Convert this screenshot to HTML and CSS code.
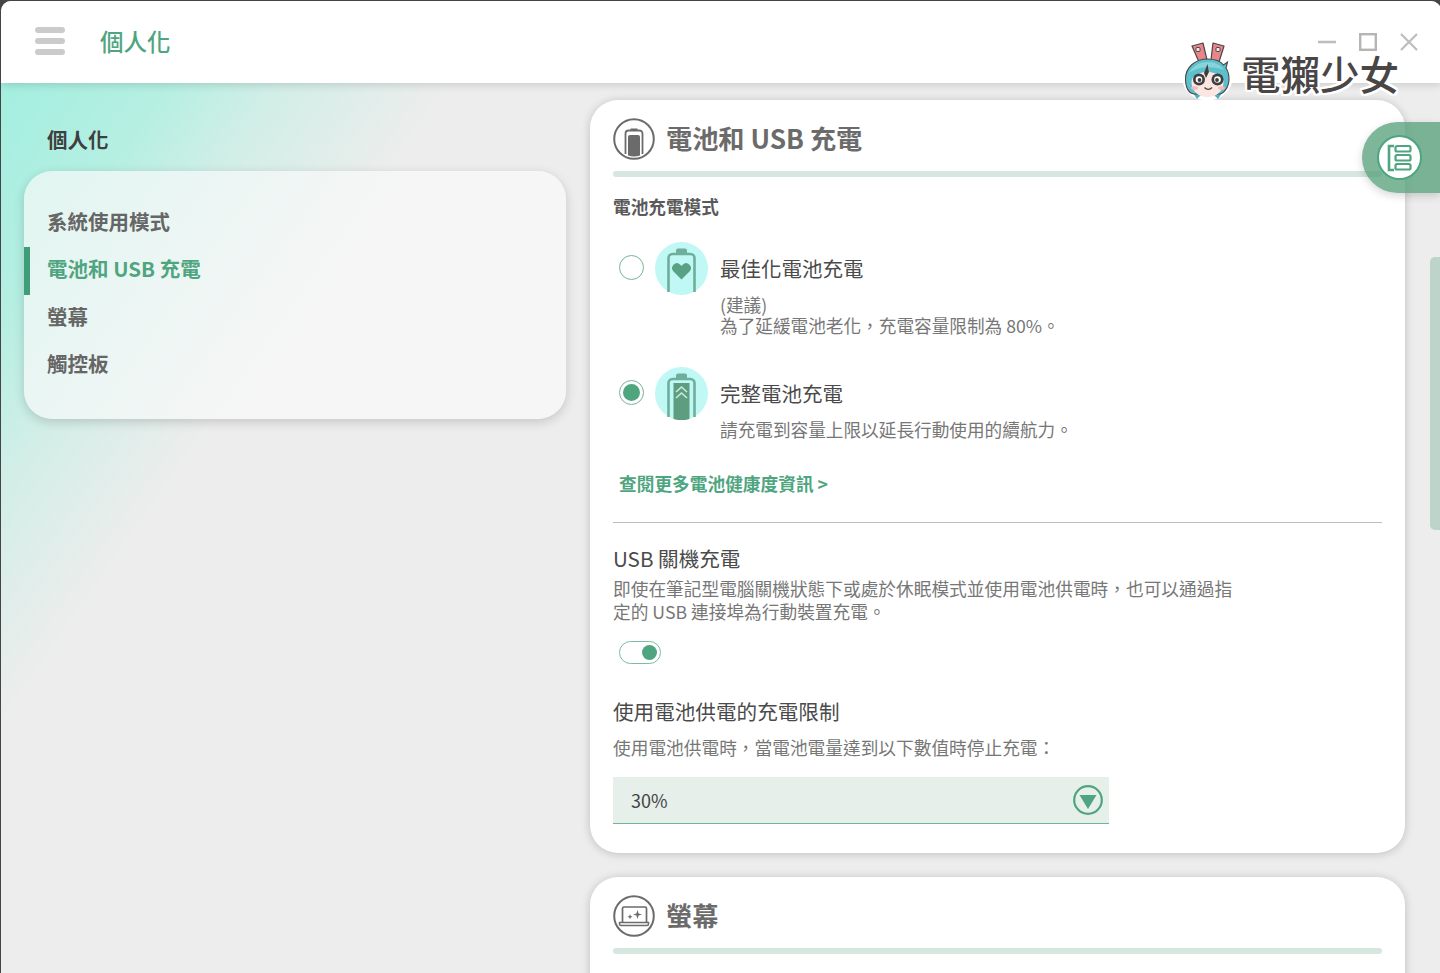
FILE: index.html
```html
<!DOCTYPE html>
<html lang="zh-Hant">
<head>
<meta charset="utf-8">
<title>個人化</title>
<link rel="stylesheet" href="styles.css">
</head>
<body>
<div class="window">
  <header class="topbar">
    <div class="hamburger"><span></span><span></span><span></span></div>
    <div class="app-title">個人化</div>
    <div class="win-controls">
      <svg width="18" height="18" viewBox="0 0 18 18"><path d="M0 9h18" stroke="#bdbdbd" stroke-width="2.4"/></svg>
      <svg width="18" height="18" viewBox="0 0 18 18"><rect x="1.2" y="1.2" width="15.6" height="15.6" fill="none" stroke="#b5b5b5" stroke-width="2.4"/></svg>
      <svg width="18" height="18" viewBox="0 0 18 18"><path d="M1 1l16 16M17 1L1 17" stroke="#bdbdbd" stroke-width="2.2" fill="none"/></svg>
    </div>
  </header>
  <main class="content">
    <aside class="sidebar">
      <h2 class="side-title">個人化</h2>
      <nav class="side-card">
        <a class="side-item">系統使用模式</a>
        <a class="side-item active">電池和 USB 充電</a>
        <a class="side-item">螢幕</a>
        <a class="side-item">觸控板</a>
      </nav>
    </aside>
    <section class="panel">
      <article class="card card-main">
        <div class="card-head">
          <svg class="head-icon" width="42" height="42" viewBox="0 0 42 42">
            <circle cx="21" cy="21" r="19.8" fill="none" stroke="#6b6b6b" stroke-width="2"/>
            <path d="M12.5 36V15.5a3 3 0 0 1 3-3h11a3 3 0 0 1 3 3V36" fill="none" stroke="#6b6b6b" stroke-width="1.8"/>
            <path d="M17.5 12.5V10.5h7v2z" fill="#6b6b6b"/>
            <path d="M15 37.5V19a2 2 0 0 1 2-2h8a2 2 0 0 1 2 2v18.5a19 19 0 0 1-12 0z" fill="#6b6b6b"/>
          </svg>
          <h3 class="card-title">電池和 USB 充電</h3>
        </div>
        <div class="head-bar"></div>
        <div class="label-strong">電池充電模式</div>

        <div class="option opt-first">
          <span class="radio"></span>
          <svg class="opt-icon" width="53" height="53" viewBox="0 0 53 53">
            <circle cx="26.5" cy="26.5" r="26.5" fill="#bff8f5"/>
            <path d="M13.5 50V16a4 4 0 0 1 4-4h18a4 4 0 0 1 4 4v34" fill="none" stroke="#6fae9a" stroke-width="2.6"/>
            <path d="M21 11.5V8.500a2 2 0 0 1 2-2h7a2 2 0 0 1 2 2v3z" fill="#6fae9a"/>
            <path d="M26.500 37.500l-8-8a5 5 0 0 1 0-6.800 5 5 0 0 1 6.800 0l1.200 1.200 1.200-1.200a5 5 0 0 1 6.800 0 5 5 0 0 1 0 6.800z" fill="#58a283"/>
          </svg>
          <div class="opt-body">
            <div class="opt-title">最佳化電池充電</div>
            <div class="opt-desc opt-desc-tight">(建議)<br>為了延緩電池老化，充電容量限制為 80%。</div>
          </div>
        </div>

        <div class="option opt-second">
          <span class="radio checked"></span>
          <svg class="opt-icon" width="53" height="53" viewBox="0 0 53 53">
            <circle cx="26.5" cy="26.5" r="26.5" fill="#bff8f5"/>
            <path d="M13.5 50V16a4 4 0 0 1 4-4h18a4 4 0 0 1 4 4v34" fill="none" stroke="#6fae9a" stroke-width="2.6"/>
            <path d="M21 11.5V8.500a2 2 0 0 1 2-2h7a2 2 0 0 1 2 2v3z" fill="#6fae9a"/>
            <path d="M18.500 16h16v36a26 26 0 0 1-16 0z" fill="#5f9d80"/>
            <path d="M21 25l5.500-5 5.500 5M21 31l5.500-5 5.500 5" fill="none" stroke="#c6ecdf" stroke-width="1.600"/>
          </svg>
          <div class="opt-body">
            <div class="opt-title">完整電池充電</div>
            <div class="opt-desc opt-desc-gap">請充電到容量上限以延長行動使用的續航力。</div>
          </div>
        </div>

        <a class="more-link">查閱更多電池健康度資訊 &gt;</a>
        <hr class="divider">

        <div class="sec-title">USB 關機充電</div>
        <p class="sec-desc">即使在筆記型電腦關機狀態下或處於休眠模式並使用電池供電時，也可以通過指定的 USB 連接埠為行動裝置充電。</p>
        <div class="toggle"><span class="knob"></span></div>

        <div class="sec-title sec-title-2">使用電池供電的充電限制</div>
        <p class="sec-desc sec-desc-2">使用電池供電時，當電池電量達到以下數值時停止充電：</p>
        <div class="select">
          <span>30%</span>
          <svg width="30" height="30" viewBox="0 0 30 30">
            <circle cx="15" cy="15" r="13.800" fill="none" stroke="#4fa57f" stroke-width="2.200"/>
            <path d="M6.500 10h17L15 24z" fill="#4fa57f"/>
          </svg>
        </div>
      </article>

      <article class="card card-second">
        <div class="card-head">
          <svg class="head-icon" width="42" height="42" viewBox="0 0 42 42">
            <circle cx="21" cy="21" r="19.800" fill="none" stroke="#6b6b6b" stroke-width="2"/>
            <path d="M9.500 27V13.500a1.500 1.500 0 0 1 1.500-1.500h21a1.500 1.500 0 0 1 1.500 1.500V27" fill="none" stroke="#6b6b6b" stroke-width="1.700"/>
            <path d="M6.500 27.500h29v1.500a1.500 1.500 0 0 1-1.500 1.500H8a1.500 1.500 0 0 1-1.500-1.500z" fill="none" stroke="#6b6b6b" stroke-width="1.500"/>
            <path d="M24.500 15l1.100 3.400 3.400 1.100-3.400 1.100-1.100 3.400-1.100-3.400-3.400-1.100 3.400-1.100zM17 19l.7 2 2 .7-2 .7-.7 2-.7-2-2-.7 2-.7z" fill="#6b6b6b"/>
          </svg>
          <h3 class="card-title">螢幕</h3>
        </div>
        <div class="head-bar"></div>
      </article>
    </section>
  </main>

  <div class="scroll-thumb"></div>

  <div class="float-tab">
    <span class="float-circle">
      <svg width="26" height="28" viewBox="0 0 26 28">
        <path d="M7 2H2v24h5" fill="none" stroke="#4fa57f" stroke-width="2.600"/>
        <rect x="8.500" y="2" width="15" height="5.500" rx="1.500" fill="none" stroke="#4fa57f" stroke-width="2.200"/>
        <rect x="8.500" y="11" width="15" height="5.500" rx="1.500" fill="none" stroke="#4fa57f" stroke-width="2.200"/>
        <rect x="8.500" y="20" width="15" height="5.500" rx="1.500" fill="none" stroke="#4fa57f" stroke-width="2.200"/>
      </svg>
    </span>
  </div>

  <div class="logo">
    <svg width="54" height="60" viewBox="0 0 54 60">
      <g fill="#fff" stroke="#fff" stroke-width="5" stroke-linejoin="round">
        <path d="M9 5l11-3 4 17-8 2z"/>
        <path d="M30 2l11 3-5 16-8-2z"/>
        <ellipse cx="24.300" cy="37" rx="22.500" ry="20"/>
      </g>
      <g stroke="#4a4646" stroke-width="1.200" stroke-linejoin="round">
        <path d="M9 5l11-3 4 17-8 2z" fill="#e8868c"/>
        <path d="M30 2l11 3-5 16-8-2z" fill="#e8868c"/>
      </g>
      <rect x="13" y="6.500" width="4" height="4" rx="1" fill="#f4e6e4" stroke="#4a4646"/>
      <rect x="33" y="6.500" width="4" height="4" rx="1" fill="#f4e6e4" stroke="#4a4646"/>
      <path d="M10 52l4 6 4-4zM39 52l-4 6-4-4z" fill="#4db0c2"/>
      <path d="M2.500 38c0-12 10-20 22-20 7 0 13 2 16 6l4-3-1.500 6c2 3 3 7 3 11 0 9-6 15-10 15H12C6 53 2.500 47 2.500 38z" fill="#5cbfcc" stroke="#4a4646" stroke-width="1.100"/>
      <path d="M6 32c4-8 12-11 19-11 7 0 13 3 16 8-10-4-25-4-35 3z" fill="#86d3da"/>
      <path d="M8.500 41c0-6 7-9 13-10l3-6 2 6c7 1 14 4 14 10 0 9-7 15-16 15S8.500 50 8.500 41z" fill="#fbe6e0"/>
      <path d="M24.500 23l-3.500 9 2 5 3-6z" fill="#3f3d3d"/>
      <circle cx="16" cy="38.500" r="6" fill="#3f3d3d"/><circle cx="34.500" cy="38.500" r="6" fill="#3f3d3d"/>
      <circle cx="16" cy="38.500" r="3.300" fill="#fff"/><circle cx="34.500" cy="38.500" r="3.300" fill="#fff"/>
      <circle cx="16.500" cy="39" r="1.900" fill="#3f3d3d"/><circle cx="34" cy="39" r="1.900" fill="#3f3d3d"/>
      <path d="M21.500 46.500c2 2.500 5.500 2.500 7.500 0" fill="none" stroke="#4a4646" stroke-width="1.300"/>
      <ellipse cx="11.500" cy="47" rx="3.500" ry="1.800" fill="#f5b9b9"/><ellipse cx="38.500" cy="47" rx="3.500" ry="1.800" fill="#f5b9b9"/>
    </svg>
    <span class="logo-text">電獺少女</span>
  </div>
</div>
</body>
</html>
```

FILE: styles.css
```css
* { box-sizing: border-box; }
html, body { margin: 0; height: 100%; overflow: hidden; background: #454545; }
body { font-family: "Noto Sans CJK TC", "Noto Sans", sans-serif; }
.window {
  position: relative; width: 1440px; height: 973px; margin: 1px 0 0 1px;
  border-radius: 10px 10px 0 0; overflow: hidden; background: #ededed;
  display: flex; flex-direction: column;
}
.topbar {
  height: 82px; flex: none; background: #fff; display: flex; align-items: center;
  padding-left: 34px; position: relative; z-index: 2; box-shadow: 0 2px 8px rgba(0,0,0,.14);
}
.hamburger { width: 30px; margin-top: -2px; display: flex; flex-direction: column; gap: 5px; }
.hamburger span { height: 6px; border-radius: 3px; background: #cbcbcb; }
.app-title { margin: 0 0 0 35px; font-size: 23.500px; line-height: 1; font-weight: 500; color: #4fa57f; }
.win-controls { margin-left: auto; margin-right: 23px; margin-top: -1px; display: flex; gap: 23px; }
.win-controls svg { display: block; }
.content {
  flex: 1; min-height: 0; display: flex; overflow: hidden;
  background: linear-gradient(125deg, #a3efe0 0%, #b5efe2 8%, #d3eee7 14%, #ededed 22%);
}
.sidebar { width: 589px; flex: none; padding: 43px 24px 0 23px; }
.side-title { margin: 0 0 19px 23px; font-size: 20.500px; line-height: 26px; font-weight: 700; color: #3f3f3f; }
.side-card {
  height: 248px; border-radius: 28px; padding: 29px 0 0; display: flex; flex-direction: column;
  background: linear-gradient(125deg, #e1f6f1 0%, #f6f6f6 55%);
  box-shadow: 0 3px 11px rgba(0,0,0,.17);
}
.side-item { display: block; height: 47.300px; line-height: 43px; padding-left: 23px; font-size: 20.500px; font-weight: 700; color: #666; }
.side-item.active { color: #4fa57f; border-left: 6px solid #3f9e78; padding-left: 17px; }
.panel { flex: 1; padding-top: 17px; min-width: 0; }
.card {
  width: 815px; background: #fff; border-radius: 28px; padding: 17px 23px 0;
  box-shadow: 0 1px 10px rgba(0,0,0,.2);
}
.card-main { height: 753px; }
.card-second { height: 300px; margin-top: 24px; }
.card-head { display: flex; align-items: center; height: 44px; }
.head-icon { flex: none; display: block; }
.card-title { margin: -2px 0 0 11px; font-size: 26.200px; line-height: 36px; font-weight: 700; color: #6b6b6b; }
.head-bar { height: 6px; margin-top: 10px; border-radius: 3px; background: #d6e7df; }
.label-strong { margin-top: 18px; font-size: 17.650px; line-height: 24px; font-weight: 700; color: #5a5a5a; }
.option { display: flex; align-items: flex-start; padding-left: 6px; }
.opt-first { margin-top: 23px; height: 125px; }
.opt-second { height: 102px; }
.radio {
  width: 25px; height: 25px; flex: none; margin-top: 13px; border-radius: 50%;
  border: 1.500px solid #74b59b; background: #fff; position: relative;
}
.radio.checked::after {
  content: ""; position: absolute; inset: 3px; border-radius: 50%; background: #4fa57f;
}
.opt-icon { flex: none; margin-left: 11px; display: block; }
.opt-body { margin-left: 12px; }
.opt-title { margin-top: 11px; font-size: 20.500px; line-height: 30px; color: #4a4a4a; }
.opt-desc { font-size: 17.650px; color: #777; }
.opt-desc-tight { margin-top: 11px; line-height: 21px; }
.opt-desc-gap { margin-top: 9px; line-height: 26px; }
.more-link { display: block; margin: 0 0 0 6px; padding-top: 1px; font-size: 17.700px; line-height: 26px; font-weight: 700; color: #4fa57f; }
.divider { margin: 26px 0 0; border: 0; border-top: 1px solid #bdbdbd; }
.sec-title { margin-top: 20px; font-size: 20.600px; line-height: 30px; color: #4a4a4a; }
.sec-title-2 { margin-top: 32px; }
.sec-desc { margin: 4px 0 0; width: 625px; font-size: 17.700px; line-height: 23px; color: #777; }
.sec-desc-2 { margin-top: 7px; width: auto; line-height: 28px; }
.toggle {
  width: 42px; height: 23px; margin: 18px 0 0 6px; border-radius: 12px;
  border: 1.500px solid #7cbca1; display: flex; align-items: center; justify-content: flex-end; padding-right: 3px;
}
.knob { width: 15px; height: 15px; border-radius: 50%; background: #4fa57f; }
.select {
  width: 496px; height: 47px; margin-top: 16px; padding: 0 6px 0 18px; display: flex; align-items: center; justify-content: space-between;
  background: #e6efea; border-bottom: 1px solid #6fb597; font-size: 18px; color: #444;
}
.select svg { display: block; }
.scroll-thumb {
  position: absolute; right: 0; top: 256px; width: 11px; height: 273px;
  background: #bcd4c9; border-radius: 5px 0 0 5px;
}
.float-tab {
  position: absolute; right: 1px; top: 121px; width: 78px; height: 71px;
  border-radius: 36px 0 0 36px; background: rgba(80,156,118,.74);
  box-shadow: 0 3px 8px rgba(0,0,0,.16); display: flex; align-items: center; padding-left: 15px;
}
.float-circle {
  width: 45px; height: 45px; border-radius: 50%; background: #fff; border: 2px solid #4fa57f;
  display: flex; align-items: center; justify-content: center;
}
.logo { position: absolute; left: 1182px; top: 40px; display: flex; align-items: center; z-index: 3; }
.logo svg { display: block; }
.logo-text {
  margin-left: 4px; margin-top: 4px; font-size: 39.500px; line-height: 1; font-weight: 500; color: #4a4646;
  text-shadow: 2px 0 0 #fff, -2px 0 0 #fff, 0 2px 0 #fff, 0 -2px 0 #fff, 2px 2px 0 #fff, -2px -2px 0 #fff, 2px -2px 0 #fff, -2px 2px 0 #fff;
}
```
